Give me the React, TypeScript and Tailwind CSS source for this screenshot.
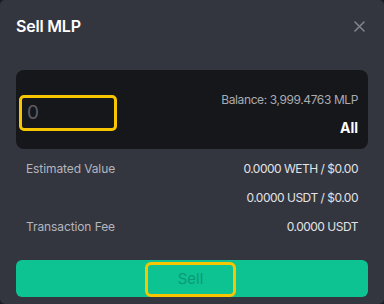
const rows = [
  { label: "Estimated Value", value: "0.0000 WETH / $0.00" },
  { label: "", value: "0.0000 USDT / $0.00" },
  { label: "Transaction Fee", value: "0.0000 USDT" },
];

export default function App() {
  return (
    <div className="h-[304px] w-[384px] bg-[#1b1c21] font-['Inter',sans-serif]">
      <div className="flex h-full flex-col rounded-[5px] bg-[#33353f] px-4 pt-[14px]">
        <div className="flex h-6 items-center justify-between">
          <h2 className="text-[16px] font-semibold tracking-[-0.2px] text-white">Sell MLP</h2>
          <svg width="11" height="11" viewBox="0 0 11 11" className="mr-[3px] mt-[1px] text-[#80828c]">
            <path d="M1 1L10 10M10 1L1 10" stroke="currentColor" strokeWidth="1.6" strokeLinecap="round" />
          </svg>
        </div>

        <div className="mt-8 flex h-[79px] justify-between rounded-lg bg-[#16171b] pl-[3px] pr-[10px]">
          <div className="mt-[25px] flex h-9 w-[98px] items-center rounded-[5px] border-[3px] border-[#f7c600] pl-[5px] text-[19px] text-[#5c5e66]">0</div>
          <div className="flex flex-col items-end pt-[21px]">
            <span className="text-[12px] tracking-[-0.4px] text-[#a9abb2]">Balance: 3,999.4763 MLP</span>
            <span className="mt-[8px] text-[14px] font-bold text-white">All</span>
          </div>
        </div>

        <div className="mt-[5px] px-[10px] text-[12px]">
          {rows.map((r) => (
            <div key={r.value} className="flex h-[29px] items-center justify-between">
              <span className="tracking-[-0.1px] text-[#b4b6bd]">{r.label}</span>
              <span className="tracking-[-0.5px] text-[#e2e3e6]">{r.value}</span>
            </div>
          ))}
        </div>

        <button className="mt-[19px] flex h-[37px] items-end justify-center rounded-md bg-[#0ec392]">
          <span className="mr-[3px] flex h-[35px] w-[91px] items-center justify-center rounded-md border-[3px] border-[#f7c600] text-[15px] text-[#0b9a72]">Sell</span>
        </button>
      </div>
    </div>
  );
}
